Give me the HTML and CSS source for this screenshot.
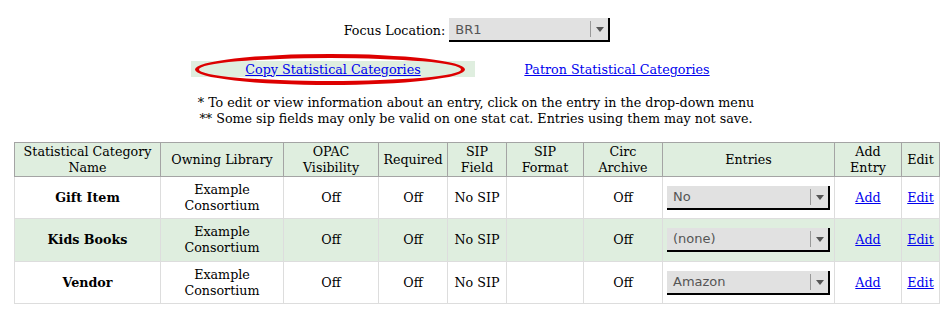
FILE: index.html
```html
<!DOCTYPE html>
<html lang="en">
<head>
    <meta charset="UTF-8">
    <title>Statistical Categories</title>
    <link rel="stylesheet" href="styles.css">
</head>
<body>

    <!-- Focus location picker -->
    <div class="focus-row">
        <span class="focus-label">Focus Location:</span>
        <div class="dropdown focus-select">
            <span class="dropdown-value">BR1</span>
            <span class="dropdown-arrow"></span>
        </div>
    </div>

    <!-- Links -->
    <table class="link-table">
        <tr>
            <td class="link-cell highlight">
                <a href="#">Copy Statistical Categories</a>
                <span class="circle"></span>
            </td>
            <td class="link-cell"><a href="#">Patron Statistical Categories</a></td>
        </tr>
    </table>

    <div class="notes">
        <div>* To edit or view information about an entry, click on the entry in the drop-down menu</div>
        <div>** Some sip fields may only be valid on one stat cat. Entries using them may not save.</div>
    </div>

    <!-- Stat cat table -->
    <table class="stat-table">
        <thead>
            <tr>
                <th class="c-name">Statistical Category Name</th>
                <th class="c-lib">Owning Library</th>
                <th class="c-opac">OPAC Visibility</th>
                <th class="c-req">Required</th>
                <th class="c-sip">SIP Field</th>
                <th class="c-fmt">SIP Format</th>
                <th class="c-circ">Circ Archive</th>
                <th class="c-entries">Entries</th>
                <th class="c-add">Add Entry</th>
                <th class="c-edit">Edit</th>
            </tr>
        </thead>
        <tbody>
            <tr>
                <td class="name">Gift Item</td>
                <td>Example<br>Consortium</td>
                <td>Off</td>
                <td>Off</td>
                <td>No SIP</td>
                <td></td>
                <td>Off</td>
                <td><div class="dropdown"><span class="dropdown-value">No</span><span class="dropdown-arrow"></span></div></td>
                <td><a href="#">Add</a></td>
                <td><a href="#">Edit</a></td>
            </tr>
            <tr class="alt">
                <td class="name">Kids Books</td>
                <td>Example<br>Consortium</td>
                <td>Off</td>
                <td>Off</td>
                <td>No SIP</td>
                <td></td>
                <td>Off</td>
                <td><div class="dropdown"><span class="dropdown-value">(none)</span><span class="dropdown-arrow"></span></div></td>
                <td><a href="#">Add</a></td>
                <td><a href="#">Edit</a></td>
            </tr>
            <tr>
                <td class="name">Vendor</td>
                <td>Example<br>Consortium</td>
                <td>Off</td>
                <td>Off</td>
                <td>No SIP</td>
                <td></td>
                <td>Off</td>
                <td><div class="dropdown"><span class="dropdown-value">Amazon</span><span class="dropdown-arrow"></span></div></td>
                <td><a href="#">Add</a></td>
                <td><a href="#">Edit</a></td>
            </tr>
        </tbody>
    </table>

</body>
</html>
```

FILE: styles.css
```css
body {
    margin: 8px;
    background: #ffffff;
    color: #000000;
    font-family: 'DejaVu Serif', serif;
    font-size: 12.7px;
}

a {
    color: #0000ee;
}

/* Focus location */
.focus-row {
    display: flex;
    justify-content: center;
    align-items: center;
    gap: 4px;
    margin-top: 10px;
    padding-left: 4px;
}

/* fake dropdown */
.dropdown {
    display: flex;
    align-items: center;
    height: 22px;
    background: #e1e1e1;
    border-right: 2px solid #000;
    border-bottom: 2px solid #000;
    font-family: 'DejaVu Sans', sans-serif;
    font-size: 13px;
    color: #555;
    text-align: left;
}

.dropdown-value {
    flex: 1;
    padding-left: 6px;
}

.dropdown-arrow {
    width: 17px;
    height: 16px;
    border-left: 1px solid #999;
    position: relative;
}

.dropdown-arrow::after {
    content: "";
    position: absolute;
    left: 5px;
    top: 6px;
    border-left: 4px solid transparent;
    border-right: 4px solid transparent;
    border-top: 5px solid #555;
}

.focus-select {
    width: 159px;
}

/* Links */
.link-table {
    margin: 19px auto 0;
    border-collapse: collapse;
}

.link-cell {
    width: 284px;
    padding: 0;
    height: 16px;
    text-align: center;
    position: relative;
}

.highlight {
    background: #dfeedf;
}

.circle {
    position: absolute;
    left: 4px;
    top: -7px;
    width: 262px;
    height: 23px;
    border: 4px solid #dd0000;
    border-radius: 50%;
}

/* Notes */
.notes {
    text-align: center;
    margin-top: 18px;
    line-height: 16px;
    padding-left: 2px;
}

/* Stat cat table */
.stat-table {
    width: 925px;
    table-layout: fixed;
    margin: 15px 0 0 6px;
    border-collapse: collapse;
    text-align: center;
}

.stat-table th,
.stat-table td {
    box-sizing: border-box;
    line-height: 16px;
}

.stat-table th {
    background: #dfeedf;
    border: 1px solid #a4a4a4;
    font-weight: normal;
    height: 34px;
    padding: 0 2px;
}

.stat-table td {
    border: 1px solid #dddddd;
    height: 42px;
    padding: 0 4px;
}

.stat-table tr.alt td {
    background: #dfeedf;
    height: 43px;
}

.stat-table td.name {
    font-weight: bold;
}

.c-name { width: 146px; }
.c-lib { width: 123px; }
.c-opac { width: 95px; }
.c-req { width: 69px; }
.c-sip { width: 59px; }
.c-fmt { width: 77px; }
.c-circ { width: 79px; }
.c-entries { width: 172px; }
.c-add { width: 67px; }
.c-edit { width: 38px; }
```
